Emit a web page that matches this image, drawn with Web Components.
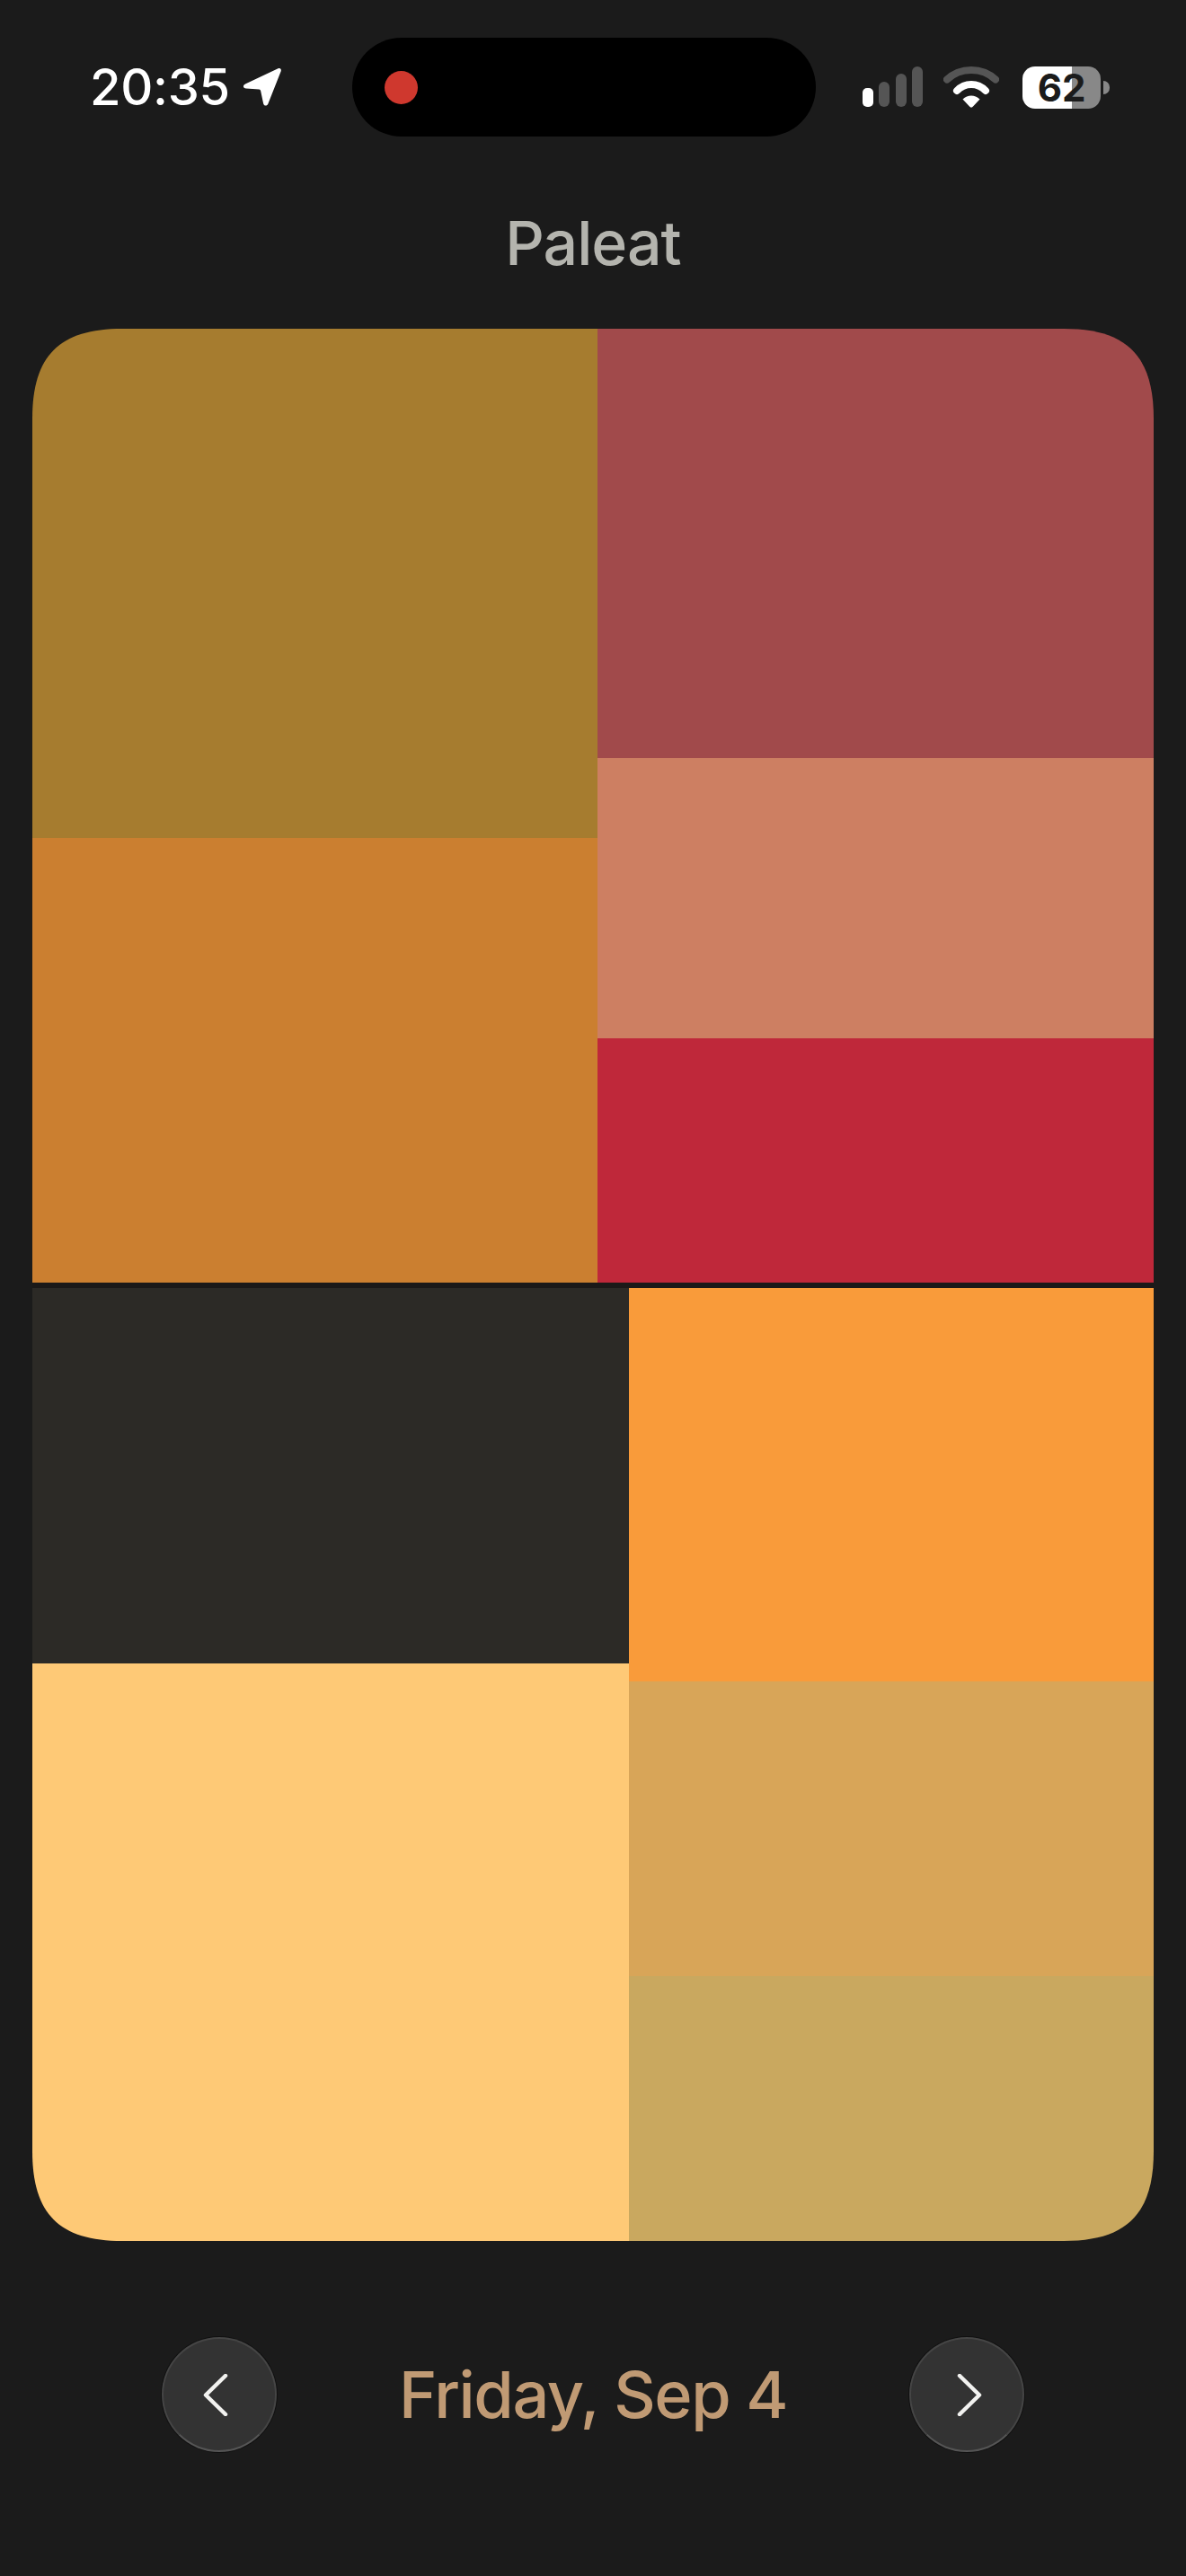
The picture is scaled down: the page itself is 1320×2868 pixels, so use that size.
<!DOCTYPE html>
<html>
<head>
<meta charset="utf-8">
<style>
html, body { margin: 0; padding: 0; background: #1b1b1b; }
body { width: 1320px; height: 2868px; overflow: hidden; font-family: Inter, sans-serif; }
</style>
</head>
<body>
<status-bar></status-bar>
<page-title>Paleat</page-title>
<palette-board>
  <palette-group split="629">
    <div slot="left" style="height:567px;background:#a67c2f"></div>
    <div slot="left" style="height:495px;background:#cb7f30"></div>
    <div slot="right" style="height:478px;background:#a14a4b"></div>
    <div slot="right" style="height:312px;background:#cd7f62"></div>
    <div slot="right" style="height:272px;background:#bf283a"></div>
  </palette-group>
  <palette-group split="664">
    <div slot="left" style="height:418px;background:#2c2a26"></div>
    <div slot="left" style="height:643px;background:#fec976"></div>
    <div slot="right" style="height:438px;background:#f99b3a"></div>
    <div slot="right" style="height:328px;background:#d8a558"></div>
    <div slot="right" style="height:295px;background:#c9a85f"></div>
  </palette-group>
</palette-board>
<date-nav>Friday, Sep 4</date-nav>

<script>
class StatusBar extends HTMLElement {
  constructor() {
    super();
    this.attachShadow({ mode: 'open' });
    this.shadowRoot.innerHTML = `
<style>
:host { display: flex; align-items: center; height: 194px; box-sizing: border-box; padding: 0 0 0 100px; color: #fff; }
.time { font-size: 56px; font-weight: 500; line-height: 1; letter-spacing: -0.3px; width: 155px; white-space: nowrap; }
.loc { width: 44px; height: 44px; margin-left: 15px; flex: none; }
.island { width: 516px; height: 110px; margin-left: 78px; background: #000; border-radius: 55px; flex: none; display: flex; align-items: center; padding-left: 36px; box-sizing: border-box; }
.dot { width: 37px; height: 37px; border-radius: 50%; background: #cf382e; }
.signal { margin-left: 51px; width: 68px; height: 46px; flex: none; }
.wifi { margin-left: 23px; width: 62px; height: 46px; flex: none; }
.battery { margin-left: 26px; display: flex; align-items: center; flex: none; }
.cell { width: 87px; height: 47px; border-radius: 14px; background: linear-gradient(90deg, #fff 0 63%, #888 63% 100%); color: #1b1b1b; font-size: 42px; font-weight: 700; line-height: 47px; text-align: center; }
.nub { width: 7px; height: 15px; margin-left: 3px; background: #888; border-radius: 0 8px 8px 0; }
</style>
<span class="time">20:35</span>
<svg class="loc" viewBox="0 0 44 44"><path d="M3 18.500 39.500 1.200c2.200-1 4 .8 3.200 3L28.400 40.500c-1.200 3-4.700 2.700-5.300-.3l-3-14.200c-.2-.9-.8-1.400-1.600-1.500L3.900 23.600C.3 23.200 0 20 3 18.500Z" fill="#fff"/></svg>
<div class="island"><div class="dot"></div></div>
<svg class="signal" viewBox="0 0 68 46">
  <rect x="1" y="24" width="12" height="21" rx="5" fill="#fff"/>
  <rect x="19" y="17" width="12" height="28" rx="6" fill="#555"/>
  <rect x="38" y="8" width="12" height="37" rx="6" fill="#555"/>
  <rect x="56" y="0" width="12" height="45" rx="6" fill="#555"/>
</svg>
<svg class="wifi" viewBox="0 0 62 46">
  <path d="M4 14.500C19 .5 43 .5 58 14.500" fill="none" stroke="#555" stroke-width="8" stroke-linecap="round"/>
  <path d="M15 27C24 17.700 38 17.700 47 27" fill="none" stroke="#fff" stroke-width="8" stroke-linecap="round"/>
  <path d="M21.500 36.500C27 31 35 31 40.500 36.500L33 44.500C32 46 30 46 29 44.500Z" fill="#fff"/>
</svg>
<div class="battery"><div class="cell">62</div><div class="nub"></div></div>`;
  }
}

class PageTitle extends HTMLElement {
  constructor() {
    super();
    this.attachShadow({ mode: 'open' });
    this.shadowRoot.innerHTML = `
<style>
:host { display: block; box-sizing: border-box; height: 172px; padding-top: 36px; text-align: center; color: #b4b4ae; font-size: 68px; font-weight: 500; line-height: 80px; letter-spacing: -1px; }
</style>
<slot></slot>`;
  }
}

class PaletteBoard extends HTMLElement {
  constructor() {
    super();
    this.attachShadow({ mode: 'open' });
    this.shadowRoot.innerHTML = `
<style>
:host { display: flex; flex-direction: column; gap: 6px; width: 1248px; margin-left: 36px; background: #1b1918;
  clip-path: path('M100 0H1148C1218 0 1248 30 1248 100V2029C1248 2099 1218 2129 1148 2129H100C30 2129 0 2099 0 2029V100C0 30 30 0 100 0Z'); }
</style>
<slot></slot>`;
  }
}

class PaletteGroup extends HTMLElement {
  constructor() {
    super();
    this.attachShadow({ mode: 'open' });
    this.shadowRoot.innerHTML = `
<style>
:host { display: flex; }
.col { display: flex; flex-direction: column; flex: none; }
.left { width: var(--split); }
.right { flex: 1; }
</style>
<div class="col left"><slot name="left"></slot></div>
<div class="col right"><slot name="right"></slot></div>`;
    this.style.setProperty('--split', this.getAttribute('split') + 'px');
  }
}

class DateNav extends HTMLElement {
  constructor() {
    super();
    this.attachShadow({ mode: 'open' });
    this.shadowRoot.innerHTML = `
<style>
:host { display: flex; align-items: center; justify-content: space-between; box-sizing: border-box; width: 960px; margin: 107px 0 0 180px; color: #c09a74; font-size: 72px; font-weight: 500; }
.label { flex: 1; text-align: center; line-height: 128px; letter-spacing: -1.4px; }
</style>
<round-button dir="left"></round-button>
<span class="label"><slot></slot></span>
<round-button dir="right"></round-button>`;
  }
}

class RoundButton extends HTMLElement {
  constructor() {
    super();
    this.attachShadow({ mode: 'open' });
    const left = this.getAttribute('dir') === 'left';
    const d = left ? 'M25 2 3 23.500 25 45' : 'M3 2 25 23.500 3 45';
    this.shadowRoot.innerHTML = `
<style>
:host { display: flex; align-items: center; justify-content: center; width: 128px; height: 128px; flex: none; box-sizing: border-box; border-radius: 50%; background: #333; border: 2px solid #454545; border-bottom-color: #555; box-shadow: 0 0 0 1px #111; }
svg { width: 28px; height: 47px; margin-${left ? 'right' : 'left'}: ${left ? 9 : 6}px; }
</style>
<svg viewBox="0 0 28 47"><path d="${d}" fill="none" stroke="#f2f2f0" stroke-width="4.500" stroke-linecap="round" stroke-linejoin="round"/></svg>`;
  }
}

customElements.define('status-bar', StatusBar);
customElements.define('page-title', PageTitle);
customElements.define('palette-board', PaletteBoard);
customElements.define('palette-group', PaletteGroup);
customElements.define('date-nav', DateNav);
customElements.define('round-button', RoundButton);
</script>
</body>
</html>
